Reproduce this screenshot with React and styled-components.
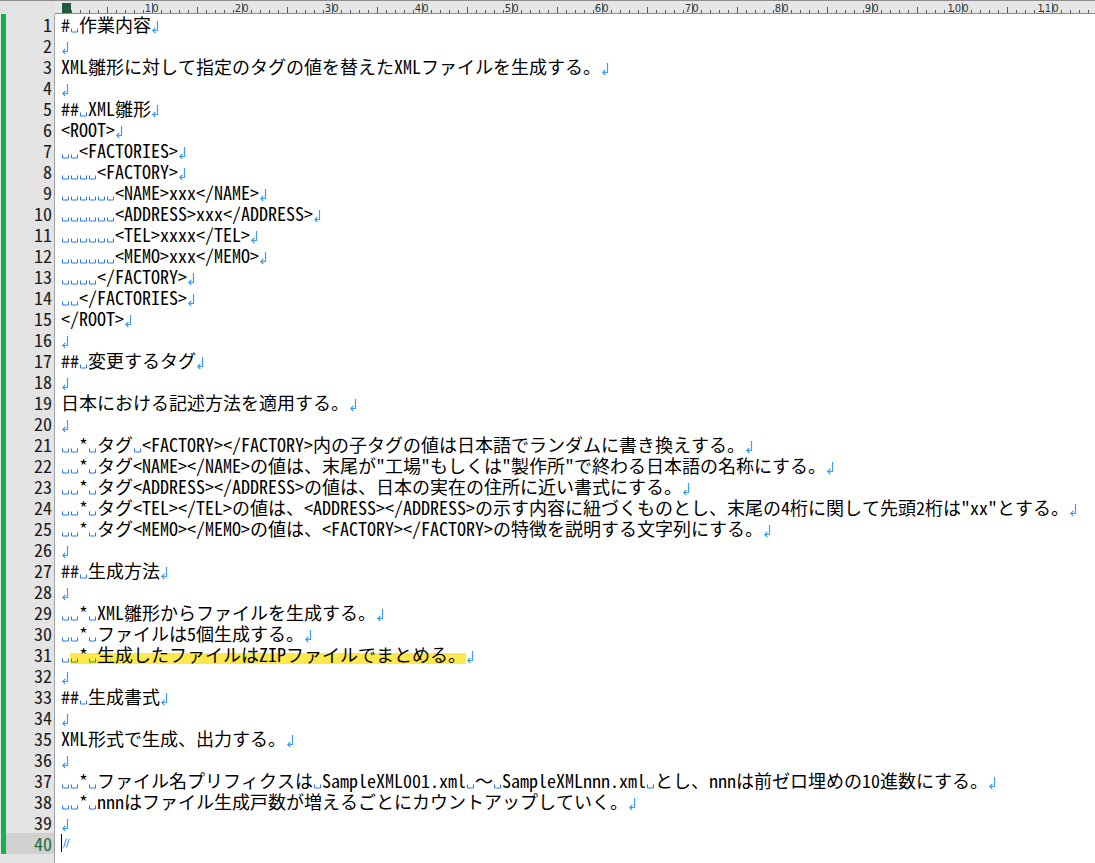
import React from "react";
import styled, { createGlobalStyle } from "styled-components";

const FONT = `"Noto Sans Mono CJK JP", "Noto Sans CJK JP", "DejaVu Sans Mono", monospace`;
const ROW = 21;
const COL = 9;
const COLS = 116;

const lines = [
  "# 作業内容",
  "",
  "XML雛形に対して指定のタグの値を替えたXMLファイルを生成する。",
  "",
  "## XML雛形",
  "<ROOT>",
  "  <FACTORIES>",
  "    <FACTORY>",
  "      <NAME>xxx</NAME>",
  "      <ADDRESS>xxx</ADDRESS>",
  "      <TEL>xxxx</TEL>",
  "      <MEMO>xxx</MEMO>",
  "    </FACTORY>",
  "  </FACTORIES>",
  "</ROOT>",
  "",
  "## 変更するタグ",
  "",
  "日本における記述方法を適用する。",
  "",
  "  * タグ <FACTORY></FACTORY>内の子タグの値は日本語でランダムに書き換えする。",
  "  * タグ<NAME></NAME>の値は、末尾が\"工場\"もしくは\"製作所\"で終わる日本語の名称にする。",
  "  * タグ<ADDRESS></ADDRESS>の値は、日本の実在の住所に近い書式にする。",
  "  * タグ<TEL></TEL>の値は、<ADDRESS></ADDRESS>の示す内容に紐づくものとし、末尾の4桁に関して先頭2桁は\"xx\"とする。",
  "  * タグ<MEMO></MEMO>の値は、<FACTORY></FACTORY>の特徴を説明する文字列にする。",
  "",
  "## 生成方法",
  "",
  "  * XML雛形からファイルを生成する。",
  "  * ファイルは5個生成する。",
  "  * 生成したファイルはZIPファイルでまとめる。",
  "",
  "## 生成書式",
  "",
  "XML形式で生成、出力する。",
  "",
  "  * ファイル名プリフィクスは SampleXML001.xml ～ SampleXMLnnn.xml とし、nnnは前ゼロ埋めの10進数にする。",
  "  * nnnはファイル生成戸数が増えるごとにカウントアップしていく。",
  "",
];

// line 31 has a marker-pen highlight from the 2nd char
const HIGHLIGHT_LINE = 30;

const GlobalStyle = createGlobalStyle`
  html, body {
    margin: 0;
    padding: 0;
    background: #ffffff;
  }
  body {
    overflow: hidden;
  }
`;

const Editor = styled.div`
  width: 1095px;
  height: 863px;
  display: flex;
  flex-direction: column;
  overflow: hidden;
  font-family: ${FONT};
  font-size: 18px;
  color: #000;
`;

const RulerBar = styled.div`
  flex: none;
  display: flex;
  height: 14px;
  box-sizing: border-box;
  background: #e6e6e6;
  border-top: 1px solid #8e8e8e;
`;

const RulerCorner = styled.div`
  flex: none;
  width: 55px;
  background: #e2e2e2;
`;

const RulerScale = styled.svg`
  flex: 1;
  display: block;
  height: 13px;
`;

const Body = styled.div`
  flex: 1;
  display: flex;
  min-height: 0;
`;

const Gutter = styled.div`
  flex: none;
  width: 54px;
  background: #e4e4e4;
  border-right: 1px solid #a2a2a2;
`;

const LineNo = styled.div`
  height: ${ROW}px;
  line-height: ${ROW}px;
  margin-left: 1px;
  border-left: 5px solid #13b24b;
  padding-right: 2px;
  text-align: right;
  color: ${(p) => (p.$current ? "#2a6a3a" : "#1a1a1a")};
  background: ${(p) => (p.$current ? "#d0d0d0" : "transparent")};
`;

const TextArea = styled.div`
  flex: 1;
  padding-left: 6px;
  background: #ffffff;
`;

const Line = styled.div`
  display: flex;
  height: ${ROW}px;
  line-height: ${ROW}px;
  white-space: pre;
`;

const Run = styled.span`
  display: block;
`;

const Mark = styled.span`
  display: flex;
  background: linear-gradient(
    to bottom,
    transparent 9px,
    #fde84c 9px,
    #fde84c 20px,
    transparent 20px
  );
`;

const Glyph = styled.svg`
  flex: none;
  display: block;
  width: ${COL}px;
  height: ${ROW}px;
`;

const Caret = styled.span`
  flex: none;
  width: 1px;
  height: 18px;
  margin-top: 1px;
  background: #000;
`;

const SpaceMark = ({ $green }) => (
  <Glyph viewBox="0 0 9 21">
    <path
      d="M1.5 14.5v3.5h6v-3.5"
      fill="none"
      stroke={$green ? "#3a9a36" : "#2c7be0"}
      strokeWidth="1"
    />
  </Glyph>
);

const NewlineMark = () => (
  <Glyph viewBox="0 0 9 21">
    <path
      d="M6.5 7v9.5H1.8M4.3 14l-2.5 2.5 2.5 2.5"
      fill="none"
      stroke="#3f9cf2"
      strokeWidth="1.2"
    />
  </Glyph>
);

const EofMark = () => (
  <Glyph viewBox="0 0 9 21">
    <path d="M1.5 14.5L4.5 5.5M4.5 14.5L7.5 5.5" fill="none" stroke="#4aa2f2" strokeWidth="1.1" />
  </Glyph>
);

const renderChars = (str, green) => {
  const parts = str.split(/( )/).filter((s) => s !== "");
  return parts.map((p, i) =>
    p === " " ? <SpaceMark key={i} $green={green} /> : <Run key={i}>{p}</Run>
  );
};

const Ruler = () => {
  const ticks = [];
  const labels = [];
  for (let c = 0; c <= COLS; c++) {
    const x = 7 + c * COL + 0.5;
    let top = 9;
    if (c % 10 === 0) top = 2;
    else if (c % 5 === 0) top = 6;
    ticks.push(<line key={c} x1={x} x2={x} y1={top} y2={12} stroke="#5a5a5a" strokeWidth="1" />);
    if (c % 10 === 0 && c > 0) {
      labels.push(
        <text
          key={"t" + c}
          x={x + 7}
          y={10.5}
          textAnchor="end"
          fontSize="10"
          fontFamily="DejaVu Sans, sans-serif"
          fill="#333"
          letterSpacing="1"
        >
          {c}
        </text>
      );
    }
  }
  return (
    <RulerScale viewBox="0 0 1040 13" preserveAspectRatio="xMinYMin meet">
      <line x1="0" x2="1040" y1="12.5" y2="12.5" stroke="#8a8a8a" strokeWidth="1" />
      {ticks}
      {labels}
      <rect x="7" y="2" width="9" height="10" fill="#1f5a3a" />
    </RulerScale>
  );
};

const App = () => {
  const total = lines.length + 1;
  return (
    <>
      <GlobalStyle />
      <Editor>
        <RulerBar>
          <RulerCorner />
          <Ruler />
        </RulerBar>
        <Body>
          <Gutter>
            {Array.from({ length: total }, (_, i) => (
              <LineNo key={i} $current={i === total - 1}>
                {i + 1}
              </LineNo>
            ))}
          </Gutter>
          <TextArea>
            {lines.map((text, i) => (
              <Line key={i}>
                {i === HIGHLIGHT_LINE ? (
                  <>
                    {renderChars(text.slice(0, 1), false)}
                    <Mark>{renderChars(text.slice(1), true)}</Mark>
                  </>
                ) : (
                  renderChars(text, false)
                )}
                <NewlineMark />
              </Line>
            ))}
            <Line>
              <Caret />
              <EofMark />
            </Line>
          </TextArea>
        </Body>
      </Editor>
    </>
  );
};

export default App;
